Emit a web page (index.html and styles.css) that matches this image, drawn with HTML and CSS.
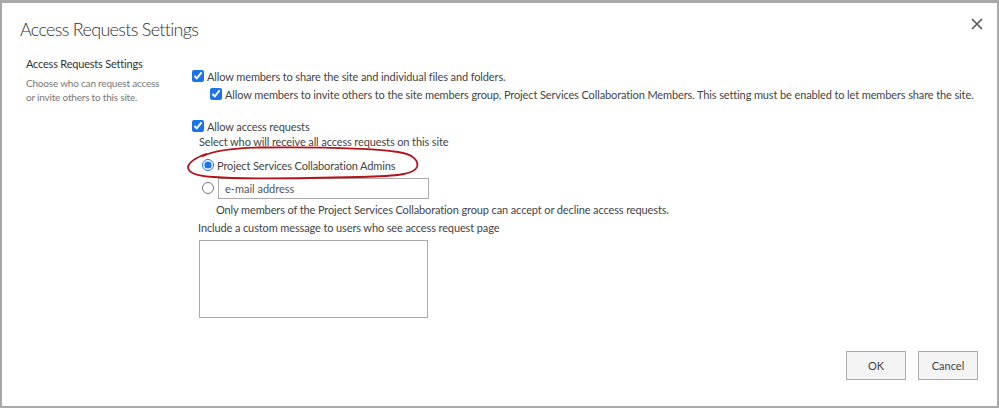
FILE: index.html
```html
<!DOCTYPE html>
<html lang="en">
<head>
    <meta charset="UTF-8">
    <title>Access Requests Settings</title>
    <link rel="stylesheet" href="styles.css">
</head>
<body>

<div class="dialog">
    <div class="dialog-head">
        <h1 class="dialog-title">Access Requests Settings</h1>
        <button class="close-button" aria-label="Close">
            <svg width="12" height="12" viewBox="0 0 12 12"><path d="M1 1L11 11M11 1L1 11" stroke="#555" stroke-width="1.6" fill="none"/></svg>
        </button>
    </div>

    <div class="section">
        <div class="section-info">
            <h2 class="section-title">Access Requests Settings</h2>
            <p class="section-desc">Choose who can request access or invite others to this site.</p>
        </div>

        <div class="section-body">
            <label class="row">
                <input type="checkbox" checked>
                Allow members to share the site and individual files and folders.
            </label>
            <label class="row indent">
                <input type="checkbox" checked>
                Allow members to invite others to the site members group, Project Services Collaboration Members. This setting must be enabled to let members share the site.
            </label>

            <label class="row spaced">
                <input type="checkbox" checked>
                Allow access requests
            </label>
            <div class="hint">Select who will receive all access requests on this site</div>

            <label class="row radio-row first">
                <input type="radio" name="receiver" checked>
                Project Services Collaboration Admins
            </label>
            <div class="row radio-row email-row">
                <input type="radio" name="receiver">
                <input type="text" class="email-input" placeholder="e-mail address">
            </div>
            <div class="note">Only members of the Project Services Collaboration group can accept or decline access requests.</div>

            <div class="message-label">Include a custom message to users who see access request page</div>
            <textarea class="message-box"></textarea>
        </div>
    </div>

    <div class="dialog-foot">
        <button class="foot-button">OK</button>
        <button class="foot-button">Cancel</button>
    </div>
</div>

<!-- hand-drawn mark around the selected option -->
<svg class="scribble" width="999" height="408" viewBox="0 0 999 408">
    <path d="M203 156 C215 150 232 148 260 147.5 C310 147 370 148 398 152 C412 154 419 160 417 167 C414 174 400 176 360 177 C300 178.5 240 179 214 177 C196 176 188 172 188 167 C189 162 195 158 206 154"
          stroke="#b3121a" stroke-width="1.8" fill="none" stroke-linecap="round"/>
</svg>

</body>
</html>
```

FILE: styles.css
```css
body {
    margin: 0;
    background-color: #a9a9a9;
    font-family: Lato, "Open Sans", Arial, sans-serif;
    color: #444;
}
.dialog {
    position: relative;
    margin: 3px 2px 0 2px;
    height: 403px;
    background-color: #fff;
    box-sizing: border-box;
}
.dialog-head {
    display: flex;
    justify-content: space-between;
    align-items: flex-start;
    padding: 15px 14px 0 18px;
    height: 50px;
    box-sizing: border-box;
}
.dialog-title {
    margin: 0;
    font-size: 18px;
    font-weight: 300;
    line-height: 22px;
    color: #333;
    letter-spacing: -0.7px;
}
.close-button {
    border: none;
    background: none;
    padding: 0;
    margin-top: 0;
    width: 12px;
    height: 12px;
    cursor: pointer;
}
.close-button svg {
    display: block;
}
.section {
    display: flex;
}
.section-info {
    width: 165px;
    padding-left: 24px;
    flex-shrink: 0;
}
.section-title {
    margin: 3px 0 0;
    font-size: 11px;
    font-weight: 400;
    line-height: 16px;
    color: #333;
    letter-spacing: -0.2px;
}
.section-desc {
    margin: 4px 0 0;
    width: 140px;
    font-size: 10px;
    line-height: 14px;
    color: #777;
    letter-spacing: -0.2px;
}
.section-body {
    padding-top: 14px;
    font-size: 11px;
    letter-spacing: -0.12px;
    flex: 1;
}
.row {
    display: flex;
    align-items: center;
    height: 18px;
    white-space: nowrap;
}
.row input[type="checkbox"],
.row input[type="radio"] {
    accent-color: #1a73e8;
    width: 12px;
    height: 12px;
    margin: 0 3px 0 1px;
}
.indent {
    padding-left: 18px;
}
.spaced {
    margin-top: 14px;
}
.hint {
    padding-left: 8px;
    height: 16px;
    line-height: 16px;
    margin-top: -1px;
}
.radio-row {
    padding-left: 10px;
}
.radio-row.first {
    margin-top: 6px;
}
.email-row {
    height: 22px;
    margin-top: 3px;
}
.email-input {
    width: 211px;
    height: 21px;
    box-sizing: border-box;
    border: 1px solid #ababab;
    font-family: inherit;
    font-size: 11px;
    padding: 0 6px;
    margin: 0 0 0 1px;
}
.email-input::placeholder {
    color: #555;
}
.note {
    padding-left: 25px;
    margin-top: 3px;
    height: 16px;
    line-height: 16px;
}
.message-label {
    padding-left: 7px;
    margin-top: 2px;
    height: 16px;
    line-height: 16px;
}
.message-box {
    display: block;
    margin: 4px 0 0 8px;
    width: 229px;
    height: 78px;
    box-sizing: border-box;
    border: 1px solid #ababab;
    resize: none;
}
.dialog-foot {
    display: flex;
    justify-content: flex-end;
    gap: 12px;
    padding-right: 19px;
    margin-top: 33px;
}
.foot-button {
    width: 60px;
    height: 29px;
    border: 1px solid #ababab;
    background-color: #f4f4f4;
    font-family: inherit;
    font-size: 11px;
    color: #444;
    padding: 0;
}
.scribble {
    position: absolute;
    left: 0;
    top: 0;
    pointer-events: none;
}
```
